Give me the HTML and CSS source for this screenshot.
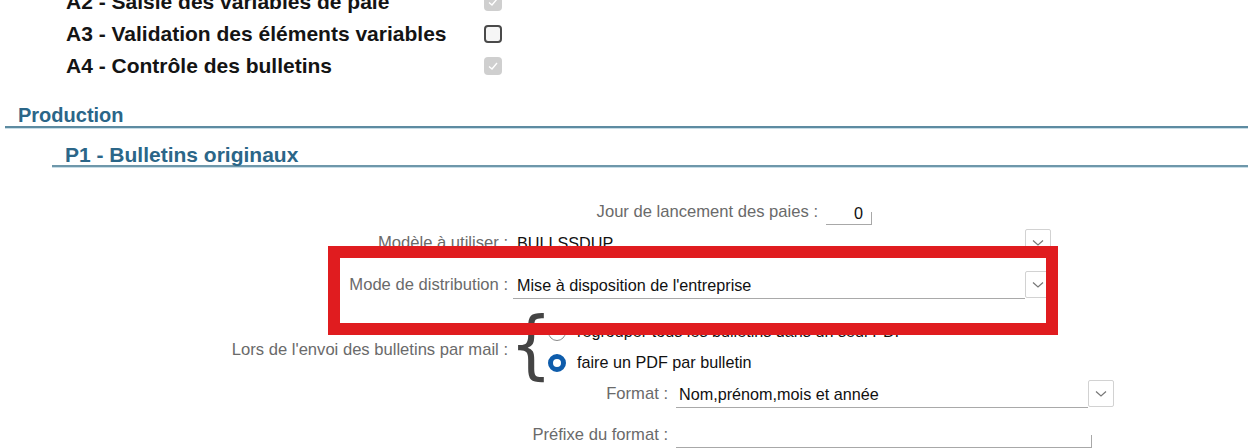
FILE: index.html
```html
<!DOCTYPE html>
<html lang="fr">
<head>
  <meta charset="UTF-8">
  <title>Paramètres de paie</title>
  <link rel="stylesheet" href="styles.css">
</head>
<body>
  <div class="page">
    <div class="etapes">
      <div class="etape">
        <span class="etape-nom">A2 - Saisie des variables de paie</span>
        <span class="case case-off"><svg viewBox="0 0 18 18" width="18" height="18"><polyline points="5,9.5 8,12 13,6" fill="none" stroke="#fff" stroke-width="1.4"/></svg></span>
      </div>
      <div class="etape">
        <span class="etape-nom">A3 - Validation des éléments variables</span>
        <span class="case case-vide"></span>
      </div>
      <div class="etape">
        <span class="etape-nom">A4 - Contrôle des bulletins</span>
        <span class="case case-off"><svg viewBox="0 0 18 18" width="18" height="18"><polyline points="5,9.5 8,12 13,6" fill="none" stroke="#fff" stroke-width="1.4"/></svg></span>
      </div>
    </div>

    <h2 class="titre">Production</h2>
    <h3 class="sous-titre">P1 - Bulletins originaux</h3>

    <div class="formulaire">
      <div class="ligne ligne-jour">
        <span class="lbl lbl-jour">Jour de lancement des paies :</span>
        <span class="saisie-jour">0</span>
      </div>

      <div class="ligne">
        <span class="lbl">Modèle à utiliser :</span>
        <span class="liste">BULLSSDUP</span>
        <span class="fleche"><svg viewBox="0 0 12 8" width="12" height="8"><polyline points="1,1.5 6,6 11,1.5" fill="none" stroke="#777" stroke-width="1.2"/></svg></span>
      </div>

      <div class="ligne ligne-mode">
        <span class="lbl">Mode de distribution :</span>
        <span class="liste">Mise à disposition de l'entreprise</span>
        <span class="fleche"><svg viewBox="0 0 12 8" width="12" height="8"><polyline points="1,1.5 6,6 11,1.5" fill="none" stroke="#777" stroke-width="1.2"/></svg></span>
      </div>

      <div class="ligne ligne-mail">
        <span class="lbl lbl-mail">Lors de l'envoi des bulletins par mail :</span>
        <span class="accolade">{</span>
        <div class="choix">
          <label class="radio"><span class="rond"></span>regrouper tous les bulletins dans un seul PDF</label>
          <label class="radio"><span class="rond rond-on"></span>faire un PDF par bulletin</label>
        </div>
      </div>

      <div class="ligne ligne-format">
        <span class="lbl lbl-format">Format :</span>
        <span class="liste liste-format">Nom,prénom,mois et année</span>
        <span class="fleche"><svg viewBox="0 0 12 8" width="12" height="8"><polyline points="1,1.5 6,6 11,1.5" fill="none" stroke="#777" stroke-width="1.2"/></svg></span>
      </div>

      <div class="ligne ligne-prefixe">
        <span class="lbl lbl-format">Préfixe du format :</span>
        <span class="saisie-prefixe"></span>
      </div>
    </div>

    <div class="cadre-rouge"></div>
  </div>
</body>
</html>
```

FILE: styles.css
```css
body {
  margin: 0;
  background: #fff;
  font-family: "Liberation Sans", Arial, sans-serif;
}
.page {
  position: relative;
  display: flow-root;
}
.etapes {
  margin-top: -14px;
}
.etape {
  display: flex;
  align-items: center;
  height: 32px;
  padding-left: 66px;
}
.etape-nom {
  width: 418px;
  font-size: 21px;
  font-weight: bold;
  color: #141414;
  white-space: nowrap;
}
.case {
  width: 18px;
  height: 18px;
  border-radius: 4px;
  box-sizing: border-box;
}
.case svg {
  display: block;
}
.case-off {
  background: #cfcfcf;
}
.case-vide {
  border: 2px solid #4a4a4a;
  background: #f6f6f6;
}
.titre {
  margin: 22px 0 0 5px;
  padding-left: 13px;
  font-size: 20px;
  line-height: 22px;
  color: #2b6688;
  border-bottom: 2px solid #5d8ba1;
  box-shadow: 0 1px 0 #c7dde7;
}
.sous-titre {
  margin: 17px 0 0 52px;
  padding-left: 13px;
  font-size: 21px;
  line-height: 20px;
  color: #2b6688;
  border-bottom: 2px solid #6e97aa;
  box-shadow: 0 1px 0 #c7dde7;
}
.formulaire {
  margin-top: 32px;
  font-size: 16.2px;
}
.ligne {
  display: flex;
  align-items: center;
  height: 28px;
}
.lbl {
  width: 508px;
  flex: none;
  text-align: right;
  color: #6a6a6a;
  font-size: 16.6px;
  white-space: nowrap;
}
.lbl-jour {
  width: 818px;
}
.lbl-format {
  width: 668px;
}
.lbl-mail {
  padding-top: 12px;
  box-sizing: border-box;
}
.ligne-jour {
  height: 26px;
  margin-bottom: 4px;
}
.saisie-jour {
  margin-left: 8px;
  width: 46px;
  height: 25px;
  line-height: 26px;
  box-sizing: border-box;
  padding-right: 9px;
  text-align: right;
  color: #111;
  border-bottom: 1px solid #a8a8a8;
  background: linear-gradient(#a8a8a8, #a8a8a8) right bottom / 1px 12px no-repeat;
}
.liste {
  margin-left: 5px;
  width: 512px;
  height: 28px;
  line-height: 28px;
  box-sizing: border-box;
  padding-left: 4px;
  color: #111;
  border-bottom: 1px solid #a9a9a9;
  white-space: nowrap;
}
.liste-format {
  margin-left: 8px;
  width: 412px;
  padding-left: 3px;
}
.fleche {
  width: 26px;
  height: 27px;
  box-sizing: border-box;
  border: 1px solid #d2d2d2;
  border-radius: 2px;
  display: flex;
  align-items: center;
  justify-content: center;
  align-self: flex-start;
}
.ligne-mode {
  margin-top: 14px;
}
.ligne-mail {
  margin-top: 11px;
  height: 68px;
}
.accolade {
  width: 36px;
  flex: none;
  font-family: "DejaVu Sans", sans-serif;
  font-size: 74px;
  line-height: 68px;
  color: #444;
  text-align: center;
  transform: scaleX(0.9);
}
.choix {
  display: flex;
  flex-direction: column;
  padding-top: 6px;
  margin-left: 4px;
}
.radio {
  display: flex;
  align-items: center;
  height: 31px;
  color: #111;
  white-space: nowrap;
}
.rond {
  width: 18px;
  height: 18px;
  box-sizing: border-box;
  border-radius: 50%;
  border: 1.5px solid #8a8a8a;
  margin-right: 11px;
  background: #fff;
}
.rond-on {
  border: 5px solid #0e5cab;
}
.ligne-format {
  margin-top: 2px;
}
.ligne-prefixe {
  margin-top: 14px;
  height: 26px;
}
.saisie-prefixe {
  margin-left: 8px;
  width: 416px;
  height: 26px;
  box-sizing: border-box;
  border-bottom: 1px solid #a8a8a8;
  background: linear-gradient(#a8a8a8, #a8a8a8) right bottom / 1px 12px no-repeat;
}
.cadre-rouge {
  position: absolute;
  left: 328px;
  top: 246px;
  width: 730px;
  height: 89px;
  box-sizing: border-box;
  border: 12px solid #e01c1f;
}
```
